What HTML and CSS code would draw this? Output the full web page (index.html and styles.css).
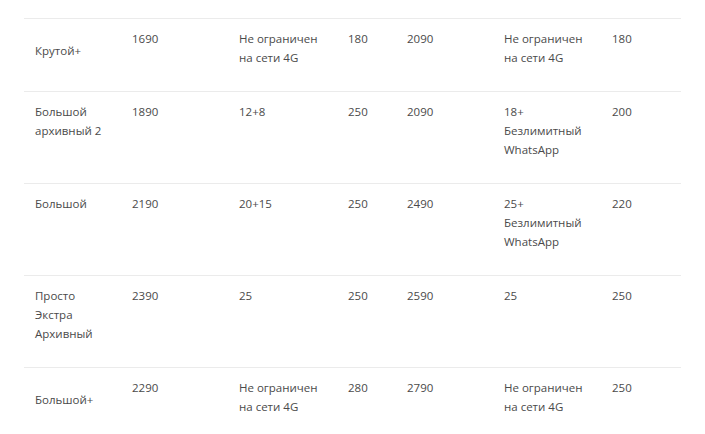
FILE: index.html
```html
<!DOCTYPE html>
<html lang="ru">
<head>
<meta charset="utf-8">
<link rel="stylesheet" href="styles.css">
</head>
<body>
<div class="wrap">
<table class="tariffs">
  <colgroup>
    <col class="c1"><col class="c2"><col class="c3"><col class="c4"><col class="c5"><col class="c6"><col class="c7">
  </colgroup>
  <tbody>
    <tr>
      <td class="low">Крутой+</td>
      <td>1690</td>
      <td>Не ограничен на сети 4G</td>
      <td>180</td>
      <td>2090</td>
      <td>Не ограничен на сети 4G</td>
      <td>180</td>
    </tr>
    <tr>
      <td>Большой архивный 2</td>
      <td>1890</td>
      <td>12+8</td>
      <td>250</td>
      <td>2090</td>
      <td>18+<br>Безлимитный WhatsApp</td>
      <td>200</td>
    </tr>
    <tr>
      <td>Большой</td>
      <td>2190</td>
      <td>20+15</td>
      <td>250</td>
      <td>2490</td>
      <td>25+<br>Безлимитный WhatsApp</td>
      <td>220</td>
    </tr>
    <tr>
      <td>Просто Экстра Архивный</td>
      <td>2390</td>
      <td>25</td>
      <td>250</td>
      <td>2590</td>
      <td>25</td>
      <td>250</td>
    </tr>
    <tr>
      <td class="low">Большой+</td>
      <td>2290</td>
      <td>Не ограничен на сети 4G</td>
      <td>280</td>
      <td>2790</td>
      <td>Не ограничен на сети 4G</td>
      <td>250</td>
    </tr>
  </tbody>
</table>
</div>
</body>
</html>
```

FILE: styles.css
```css
html, body {
  margin: 0;
  padding: 0;
  background: #ffffff;
}

.wrap {
  padding: 18px 24px 0 24px;
}

.tariffs {
  width: 657px;
  border-collapse: collapse;
  table-layout: fixed;
  font-family: "Open Sans", "Noto Sans", sans-serif;
  font-size: 11.5px;
  line-height: 19px;
  color: #4a4a4a;
}

.c1 { width: 97px; }
.c2 { width: 107px; }
.c3 { width: 109px; }
.c4 { width: 59px; }
.c5 { width: 97px; }
.c6 { width: 108px; }
.c7 { width: 80px; }

.tariffs tr {
  border-top: 1px solid #ebebeb;
}

.tariffs td {
  vertical-align: top;
  padding: 10px 14px 24px 11px;
  text-align: left;
}

.tariffs td.low {
  padding-top: 22px;
}
```
